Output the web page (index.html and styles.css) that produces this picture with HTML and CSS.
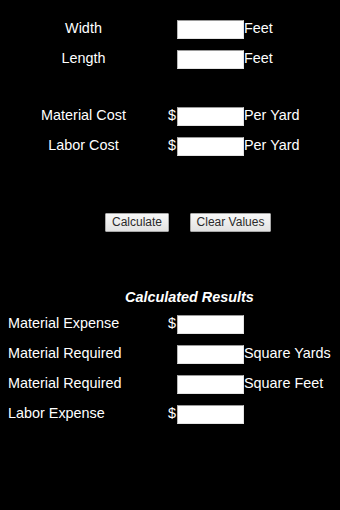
FILE: index.html
```html
<!DOCTYPE html>
<html>
<head>
<meta charset="utf-8">
<link rel="stylesheet" href="styles.css">
</head>
<body>
<div class="page">
  <div class="section inputs">
    <div class="row"><span class="label">Width</span><span class="cur"></span><span class="box"></span><span class="unit">Feet</span></div>
    <div class="row"><span class="label">Length</span><span class="cur"></span><span class="box"></span><span class="unit">Feet</span></div>
    <div class="spacer"></div>
    <div class="row"><span class="label">Material Cost</span><span class="cur">$</span><span class="box"></span><span class="unit">Per Yard</span></div>
    <div class="row"><span class="label">Labor Cost</span><span class="cur">$</span><span class="box"></span><span class="unit">Per Yard</span></div>
  </div>
  <div class="buttons">
    <button class="btn btn-calc">Calculate</button>
    <button class="btn btn-clear">Clear Values</button>
  </div>
  <div class="heading">Calculated Results</div>
  <div class="section results">
    <div class="row"><span class="label">Material Expense</span><span class="cur">$</span><span class="box"></span><span class="unit"></span></div>
    <div class="row"><span class="label">Material Required</span><span class="cur"></span><span class="box"></span><span class="unit">Square Yards</span></div>
    <div class="row"><span class="label">Material Required</span><span class="cur"></span><span class="box"></span><span class="unit">Square Feet</span></div>
    <div class="row"><span class="label">Labor Expense</span><span class="cur">$</span><span class="box"></span><span class="unit"></span></div>
  </div>
</div>
</body>
</html>
```

FILE: styles.css
```css
html, body {
  margin: 0;
  padding: 0;
  background: #000;
}
body {
  width: 340px;
  height: 510px;
  overflow: hidden;
  color: #fff;
  font-family: "Liberation Sans", Arial, sans-serif;
  font-size: 14.4px;
}
.page {
  padding: 14.5px 0 0 8px;
}
.section {
  display: flex;
  flex-direction: column;
}
.row {
  height: 30px;
  display: grid;
  grid-template-columns: 151px 18px 67px auto;
  align-items: center;
}
.label,
.cur,
.unit {
  padding-bottom: 2.5px;
  white-space: nowrap;
}
.inputs .label {
  text-align: center;
}
.results .label {
  text-align: left;
}
.cur {
  text-align: right;
  padding-right: 1px;
}
.box {
  display: block;
  height: 19px;
  box-sizing: border-box;
  background: #fff;
  border-top: 1px solid #9a9a9a;
  border-left: 1px solid #b8b8b8;
  border-right: 1px solid #e4e4e4;
  border-bottom: 1px solid #e4e4e4;
}
.spacer {
  height: 27px;
}
.buttons {
  display: flex;
  gap: 21px;
  padding-left: 97px;
  margin-top: 51.5px;
}
.btn {
  height: 19px;
  box-sizing: border-box;
  padding: 0;
  font-family: "Liberation Sans", Arial, sans-serif;
  font-size: 12px;
  color: #2a2a2a;
  background: linear-gradient(#f8f8f8, #e2e2e2);
  border: 1px solid #a8a8a8;
  border-radius: 1px;
  line-height: 17px;
}
.btn-calc {
  width: 64px;
}
.btn-clear {
  width: 81px;
}
.heading {
  margin-top: 56.5px;
  height: 17px;
  line-height: 17px;
  padding-left: 117px;
  font-weight: bold;
  font-style: italic;
}
.results {
  margin-top: 4px;
}
```
